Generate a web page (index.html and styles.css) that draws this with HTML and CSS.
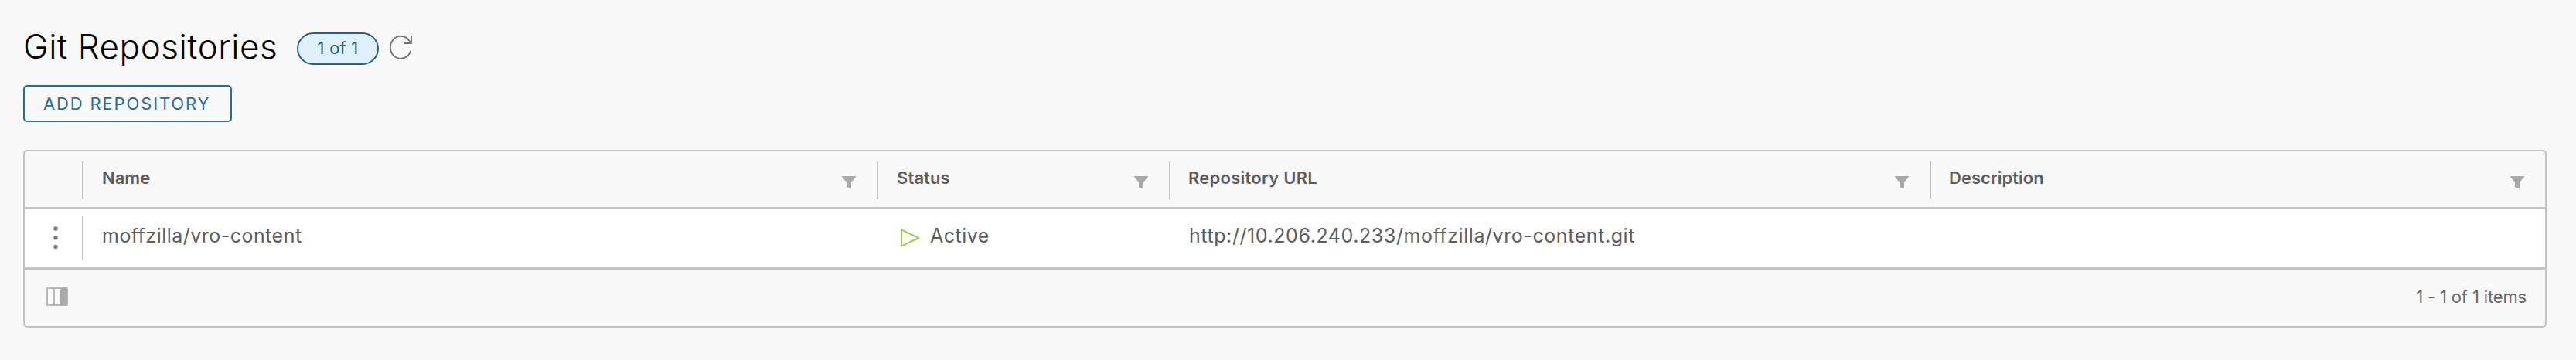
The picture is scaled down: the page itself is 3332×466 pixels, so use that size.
FILE: index.html
```html
<!DOCTYPE html>
<html lang="en">
<head>
<meta charset="utf-8">
<title>Git Repositories</title>
<link rel="stylesheet" href="styles.css">
</head>
<body>
<svg width="0" height="0" class="defs" aria-hidden="true">
  <symbol id="filter" viewBox="0 0 18 16"><path d="M0 0H18V1L12 8V16L6 14.5V8L0 1Z" fill="#a9abaa"/></symbol>
</svg>
<main class="page">
  <header class="heading">
    <h1 class="title">Git Repositories</h1>
    <span class="badge">1 of 1</span>
    <svg class="refresh" viewBox="0 0 32 32"><path d="M28.2 20.8A13.5 14.5 0 1 1 27.5 10M29 1V11H19.5" fill="none" stroke="#747474" stroke-width="1.9"/></svg>
  </header>
  <button class="add">ADD REPOSITORY</button>
  <section class="grid">
    <div class="row head">
      <div class="cell"></div>
      <div class="cell"><span>Name</span><svg class="filter"><use href="#filter"/></svg></div>
      <div class="cell"><span class="h-status">Status</span><svg class="filter"><use href="#filter"/></svg></div>
      <div class="cell"><span class="h-url">Repository URL</span><svg class="filter"><use href="#filter"/></svg></div>
      <div class="cell"><span>Description</span><svg class="filter"><use href="#filter"/></svg></div>
    </div>
    <div class="row body">
      <div class="cell actions"><svg class="dots" viewBox="0 0 6 30"><g fill="#777"><circle cx="3" cy="3" r="2.7"/><circle cx="3" cy="14.7" r="2.7"/><circle cx="3" cy="26.5" r="2.7"/></g></svg></div>
      <div class="cell"><span class="c-name">moffzilla/vro-content</span></div>
      <div class="cell"><svg class="play" viewBox="0 0 26 24"><path d="M2 1.3V22.7L24.3 12Z" fill="none" stroke="#9bcb43" stroke-width="2" stroke-linejoin="round"/></svg><span class="c-status">Active</span></div>
      <div class="cell"><span class="c-url">http://10.206.240.233/moffzilla/vro-content.git</span></div>
      <div class="cell"></div>
    </div>
    <footer class="foot">
      <svg class="columns" viewBox="0 0 28 24"><rect x="1" y="1" width="26" height="22" rx="1" fill="none" stroke="#b5b6b6" stroke-width="2"/><path d="M8 2H11V22H8Z" fill="#b9baba"/><path d="M18 1H27V23H18Z" fill="#a9abaa"/></svg>
      <span class="count">1 - 1 of 1 items</span>
    </footer>
  </section>
</main>
</body>
</html>
```
FILE: styles.css
```css
* { box-sizing: border-box; }
body { margin: 0; background: #f9f9f9; color: #5c5c5c; font-family: Inter, "Liberation Sans", sans-serif; font-size: 25px; }
.defs { display: block; height: 0; }
.page { padding: 36px 38px 0 30px; }
.heading { display: flex; align-items: flex-start; height: 74px; }
.title { margin: 0; width: 354px; font-size: 44px; line-height: 48px; font-weight: 300; color: #000; white-space: nowrap; letter-spacing: 0.55px; }
.badge { display: flex; justify-content: center; width: 106px; height: 42px; margin-top: 6px; border: 2px solid #24608a; border-radius: 21px; background: #e1f1fb; color: #245a80; font-size: 22px; line-height: 36px; letter-spacing: 0.2px; white-space: nowrap; }
.refresh { width: 32px; height: 32px; margin: 9px 0 0 13px; }
.add { display: flex; align-items: center; width: 270px; height: 48px; padding: 0 0 0 24px; border: 2px solid #266c9f; border-radius: 5px; background: transparent; color: #266c9f; font: 400 22px/44px Inter, sans-serif; letter-spacing: 1.85px; white-space: nowrap; }
.grid { margin-top: 36px; height: 230px; border: 2px solid #c4c4c4; border-radius: 5px; overflow: hidden; }
.row { display: grid; grid-template-columns: 76px 1028px 378px 984px 1fr; }
.head { height: 74px; padding-top: 12px; border-bottom: 2px solid #c4c4c4; font-size: 22px; font-weight: 600; }
.body { height: 80px; padding-top: 10px; border-bottom: 4px solid #c4c4c4; background: #fff; }
.cell { display: flex; align-items: flex-start; padding-left: 24px; white-space: nowrap; }
.cell:first-child { border-right: 2px solid #c4c4c4; }
.head .cell { height: 50px; line-height: 44px; padding-right: 29px; justify-content: space-between; }
.head .cell:last-child { padding-right: 27px; }
.head .cell:nth-child(n + 3) { border-left: 2px solid #c4c4c4; margin-left: -2px; }
.head .cell:nth-child(n + 4) { padding-left: 23px; }
.body .cell { height: 56px; line-height: 50px; }
.filter { width: 18px; height: 16px; margin-top: 20px; }
.body .actions { padding-left: 37px; }
.dots { width: 6px; height: 30px; margin-top: 13px; }
.play { width: 26px; height: 24px; margin: 16px 13px 0 4px; }
.h-status { letter-spacing: 0.1px; }
.h-url { letter-spacing: 0.25px; }
.c-name { letter-spacing: 0.48px; }
.c-status { letter-spacing: 0.5px; }
.c-url { letter-spacing: 0.57px; }
.foot { display: flex; justify-content: space-between; padding: 22px 24px 0 28px; color: #666; font-size: 22px; line-height: 24px; }
.columns { width: 28px; height: 24px; }
.count { letter-spacing: -0.15px; }
```
